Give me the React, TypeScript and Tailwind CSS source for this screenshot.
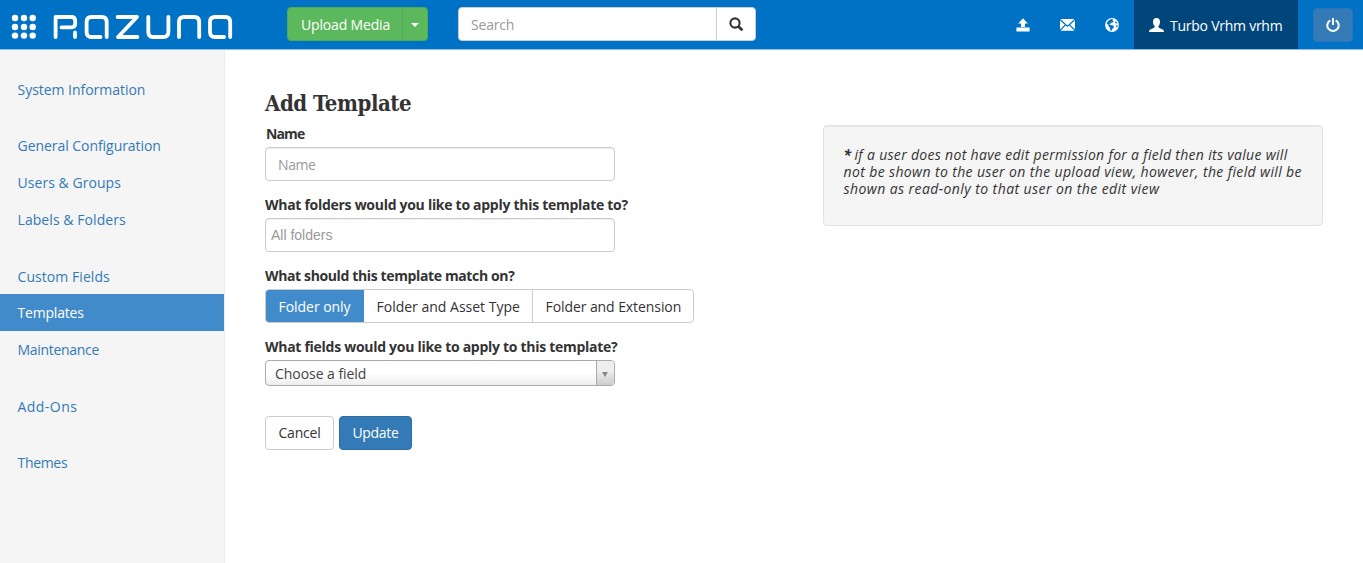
import React from "react";

function Logo() {
  return (
    <svg width="224" height="28" viewBox="11 13 224 28" fill="none" className="block shrink-0">
      {[18, 27, 35.6].map((y) =>
        [15, 24, 32.7].map((x) => <circle key={`${x}-${y}`} cx={x} cy={y} r="3.2" fill="#fff" />)
      )}
      <g stroke="#fff" strokeWidth="3.8" strokeLinecap="round" strokeLinejoin="round">
        <path d="M55.6 37V17H71.5Q75.2 17 75.2 20.8V23.6Q75.2 27.4 71.5 27.4H61.5M75 32.4V37" />
        <path d="M106.7 37V22Q106.7 17 101.7 17H91.4Q86.6 17 86.6 22V32Q86.6 37 91.4 37H100.5" />
        <path d="M117.6 17H137L118 37H137.4" />
        <path d="M148.3 17V32Q148.3 37 153.3 37H163.2Q168.4 37 168.4 32V17" />
        <path d="M179 37V22Q179 17 184 17H194.2Q199.2 17 199.2 22V37" />
        <path d="M230.2 37V22Q230.2 17 225.2 17H215Q210 17 210 22V32Q210 37 215 37H224" />
      </g>
    </svg>
  );
}

function UploadIcon() {
  return (
    <svg width="14" height="14" viewBox="0 0 14 14" fill="#fff">
      <path d="M7 0.3L11.8 5.4H9V9H5V5.4H2.2ZM0.4 9.6H13.6V12.9Q13.6 13.5 13 13.5H1Q0.4 13.5 0.4 12.9Z" />
    </svg>
  );
}

function EnvelopeIcon() {
  return (
    <svg width="15" height="12" viewBox="0 0 15 12" fill="#fff">
      <path d="M0.5 0H14.5L7.5 6.4ZM0 1.2L4.8 5.7L0 10.6ZM15 1.2V10.6L10.2 5.7ZM5.6 6.5L7.5 8.1L9.4 6.5L14.4 11.8H0.6Z" />
    </svg>
  );
}

function GlobeIcon() {
  return (
    <svg width="14" height="14" viewBox="0 0 14 14">
      <circle cx="7" cy="7" r="6.9" fill="#fff" />
      <path
        fill="#0072c6"
        d="M6.6 1.1L8.3 1.4L7.5 2.7L8.8 3.4L7.6 4.6L6.4 4.4L5.6 5.6L4.3 5.9L5.2 7L7.4 7.2L9 8.6L8.4 10.2L7 11L6.6 12.9L5.2 12.2L5.1 9.9L3.7 8.6L3.2 6.7L1.7 5.7L2.5 3.7L4.2 2.1ZM10.7 3.1L12.4 5.2L11.2 5.4L10 4.4ZM11.2 7.3L12.6 7.1L12.2 9L11.2 9.6Z"
      />
    </svg>
  );
}

function UserIcon() {
  return (
    <svg width="15" height="14" viewBox="0 0 15 14" fill="#fff">
      <path d="M7.5 0C9.8 0 11 1.5 11 3.7C11 5.5 10.5 6.9 9.4 8V9.1C9.4 9.6 9.8 9.8 10.4 10.1L13.6 11.4C14.5 11.8 14.9 12.4 14.9 13.9H0.1C0.1 12.4 0.5 11.8 1.4 11.4L4.6 10.1C5.2 9.8 5.6 9.6 5.6 9.1V8C4.5 6.9 4 5.5 4 3.7C4 1.5 5.2 0 7.5 0Z" />
    </svg>
  );
}

function PowerIcon() {
  return (
    <svg width="14" height="14" viewBox="0 0 14 14" fill="none" stroke="#fff" strokeWidth="2">
      <path d="M4.3 2.3A5.7 5.7 0 1 0 9.7 2.3M7 0V7" />
    </svg>
  );
}

function SearchIcon() {
  return (
    <svg width="15" height="15" viewBox="0 0 15 15" fill="none" stroke="#333">
      <circle cx="6" cy="6" r="4.6" strokeWidth="2.1" />
      <path d="M9.4 9.4L13.4 13.2" strokeWidth="2.8" />
    </svg>
  );
}

type NavItem = { label: string; tracking: string; active?: boolean };

const navGroups: NavItem[][] = [
  [{ label: "System Information", tracking: "tracking-[-0.03px]" }],
  [
    { label: "General Configuration", tracking: "tracking-[-0.05px]" },
    { label: "Users & Groups", tracking: "tracking-[0.05px]" },
    { label: "Labels & Folders", tracking: "tracking-[0.07px]" },
  ],
  [
    { label: "Custom Fields", tracking: "tracking-[0.06px]" },
    { label: "Templates", tracking: "tracking-[-0.2px]", active: true },
    { label: "Maintenance", tracking: "tracking-[-0.3px]" },
  ],
  [{ label: "Add-Ons", tracking: "tracking-[0.45px]" }],
  [{ label: "Themes", tracking: "tracking-[-0.32px]" }],
];

function Header() {
  return (
    <header className="flex h-[50px] shrink-0 items-start border-b border-[#8fc0e6] bg-[#0072c6]">
      <div className="pl-[11px] pt-[13px]">
        <Logo />
      </div>
      <div className="ml-[52px] mt-[7px] flex h-[34px] w-[141px] rounded border border-[#4cae4c] bg-[#5cb85c] text-white">
        <button className="w-[114px] whitespace-nowrap pl-[13px] pt-[2px] text-left tracking-[-0.17px]">Upload Media</button>
        <button className="flex flex-1 items-center justify-center border-l border-[#4cae4c] pt-px" aria-label="More">
          <svg width="8" height="4" viewBox="0 0 8 4" fill="#fff">
            <path d="M0 0H8L4 4Z" />
          </svg>
        </button>
      </div>
      <div className="ml-[30px] mt-[7px] flex h-[34px] w-[298px] overflow-hidden rounded border border-[#ccc] bg-white">
        <input
          placeholder="Search"
          className="w-[257px] pl-3 pt-[2px] tracking-[-0.2px] outline-none placeholder:text-[#999]"
        />
        <button className="flex flex-1 items-center justify-center border-l border-[#ccc]" aria-label="Search">
          <SearchIcon />
        </button>
      </div>
      <div className="ml-auto flex h-[49px] items-center">
        <div className="mr-[15px] flex items-center">
          <div className="flex w-11 justify-center"><UploadIcon /></div>
          <div className="flex w-[45px] justify-center"><EnvelopeIcon /></div>
          <div className="flex w-11 justify-center"><GlobeIcon /></div>
        </div>
        <div className="-ml-[15px] flex h-[49px] w-[164px] items-center gap-[6px] whitespace-nowrap bg-[#00467a] pl-[15px] tracking-[-0.25px] text-white">
          <UserIcon />
          <span className="pt-[2px]">Turbo Vrhm vrhm</span>
        </div>
        <button
          className="ml-[15px] mr-[10px] flex h-[34px] w-10 items-center justify-center rounded border border-[#2e74b8] bg-[#337ab7]"
          aria-label="Log out"
        >
          <PowerIcon />
        </button>
      </div>
    </header>
  );
}

function Sidebar() {
  return (
    <nav className="flex w-[225px] shrink-0 flex-col gap-5 border-r border-[#eee] bg-[#f5f5f5] pt-[20.67px]">
      {navGroups.map((group) => (
        <div key={group[0].label}>
          {group.map((item) => (
            <a
              key={item.label}
              className={`flex h-[36.7px] items-center pl-[17.5px] pt-[1.6px] ${item.tracking} ${
                item.active ? "bg-[#428bca] text-white" : "text-[#337ab7]"
              }`}
            >
              {item.label}
            </a>
          ))}
        </div>
      ))}
    </nav>
  );
}

const labelClass = "h-[21px] whitespace-nowrap text-[14px] leading-[16px] font-bold";
const inputClass =
  "h-[34px] w-[350px] rounded border border-[#ccc] bg-white shadow-[inset_0_1px_1px_rgba(0,0,0,0.075)] outline-none placeholder:text-[#999]";

function TemplateForm() {
  return (
    <section className="flex w-[558px] flex-col">
      <h1 className="h-[36px] whitespace-nowrap font-['DejaVu_Serif_Condensed','DejaVu_Serif',serif] text-[22px] leading-[27px] font-bold tracking-[-0.45px]">
        Add Template
      </h1>
      <label className={`${labelClass} pl-px tracking-[-0.9px]`}>Name</label>
      <input placeholder="Name" className={`${inputClass} pl-3 pt-px tracking-[-0.4px]`} />
      <label className={`${labelClass} mt-4 tracking-[-0.285px]`}>
        What folders would you like to apply this template to?
      </label>
      <input
        placeholder="All folders"
        className={`${inputClass} pl-[5px] font-['Liberation_Sans',sans-serif] text-[14px]`}
      />
      <label className={`${labelClass} mt-4 tracking-[-0.37px]`}>What should this template match on?</label>
      <div className="flex h-[34px] w-[429px] overflow-hidden whitespace-nowrap rounded border border-[#ccc]">
        <button className="w-[98px] bg-[#428bca] pl-[12.5px] pt-px text-left tracking-[-0.04px] text-white">Folder only</button>
        <button className="w-[169px] border-r border-[#ccc] pl-[12.5px] pt-px text-left">Folder and Asset Type</button>
        <button className="flex-1 pl-[12.5px] pt-px text-left tracking-[-0.08px]">Folder and Extension</button>
      </div>
      <label className={`${labelClass} mt-4 tracking-[-0.285px]`}>
        What fields would you like to apply to this template?
      </label>
      <div className="flex h-[26px] w-[350px] overflow-hidden rounded border border-[#aaa] bg-linear-to-b from-white from-50% to-[#eee]">
        <span className="flex flex-1 items-center pl-[9px] pt-[2px] tracking-[-0.05px] text-[#444]">Choose a field</span>
        <span className="flex w-[18px] items-center justify-center border-l border-[#aaa] bg-linear-to-t from-[#ccc] to-[#eee] to-60% pr-px pt-[3px]">
          <svg width="6" height="5" viewBox="0 0 6 5" fill="#888">
            <path d="M0 0H6L3 5Z" />
          </svg>
        </span>
      </div>
      <div className="mt-[30px] flex gap-[5px]">
        <button className="h-[34px] w-[69px] rounded border border-[#ccc] bg-white tracking-[-0.2px]">Cancel</button>
        <button className="h-[34px] w-[73px] rounded border border-[#2e6da4] bg-[#337ab7] tracking-[-0.3px] text-white">
          Update
        </button>
      </div>
    </section>
  );
}

function HelpNote() {
  return (
    <aside className="mt-[35px] h-[101px] w-[500px] whitespace-nowrap rounded border border-[#e3e3e3] bg-[#f5f5f5] pl-[19.5px] pt-[19.5px] leading-[17px] italic shadow-[inset_0_1px_1px_rgba(0,0,0,0.05)]">
      <p className="tracking-[0.31px]">
        <b className="mr-[3px] inline-block w-[8px] tracking-normal">*</b>if a user does not have edit permission for a field then its value will
      </p>
      <p className="tracking-[0.37px]">not be shown to the user on the upload view, however, the field will be</p>
      <p className="tracking-[0.42px]">shown as read-only to that user on the edit view</p>
    </aside>
  );
}

export default function App() {
  return (
    <div className="flex h-[563px] flex-col overflow-hidden bg-white font-['Open_Sans','Noto_Sans',sans-serif] text-[14px] leading-[20px] text-[#333]">
      <Header />
      <div className="flex flex-1">
        <Sidebar />
        <main className="flex flex-1 items-start pl-10 pt-10">
          <TemplateForm />
          <HelpNote />
        </main>
      </div>
    </div>
  );
}
